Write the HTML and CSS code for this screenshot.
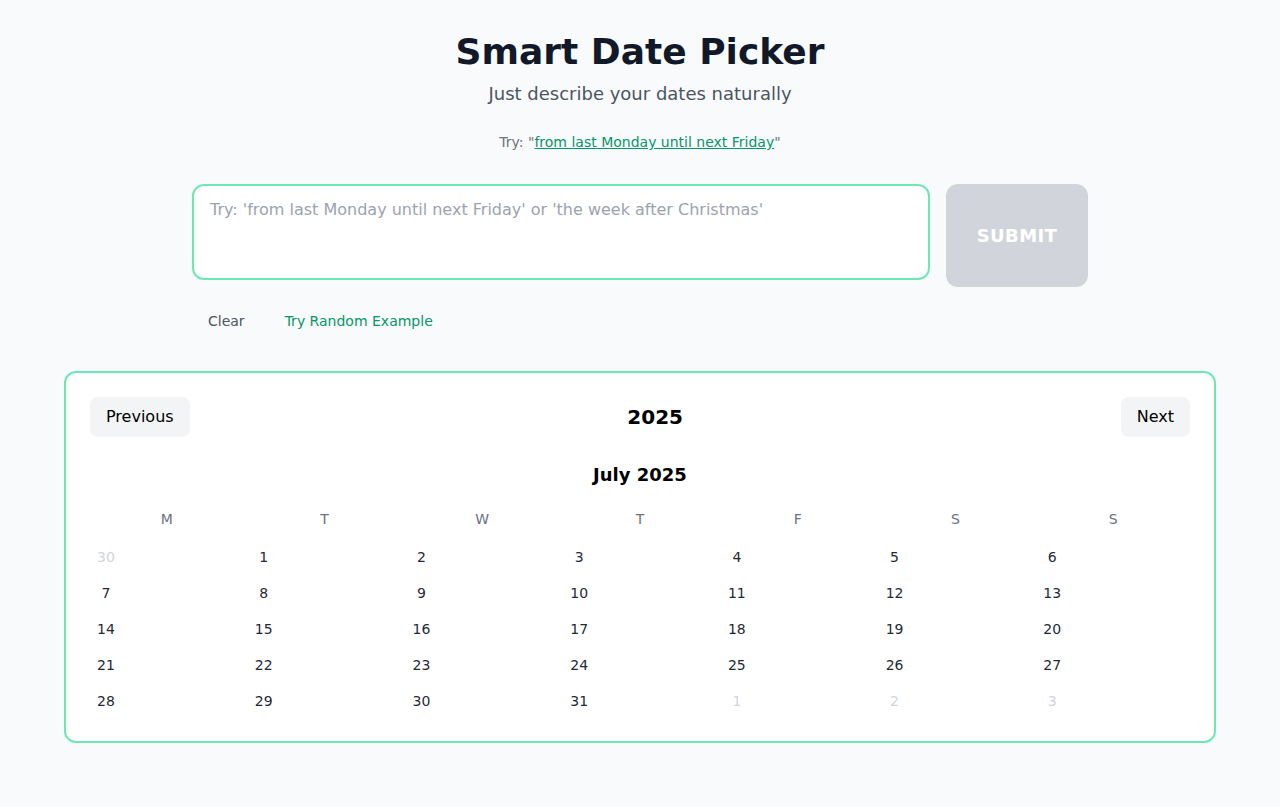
FILE: index.html
```html
<!DOCTYPE html>
<html lang="en">
<head>
<meta charset="utf-8">
<title>Smart Date Picker</title>
<link rel="stylesheet" href="styles.css">
</head>
<body>
<div class="page">
  <header class="hero">
    <h1 class="title">Smart Date Picker</h1>
    <p class="subtitle">Just describe your dates naturally</p>
    <p class="hint">Try: "<a class="hint-link" href="#">from last Monday until next Friday</a>"</p>
  </header>

  <section class="input-area">
    <div class="input-row">
      <textarea class="query" placeholder="Try: 'from last Monday until next Friday' or 'the week after Christmas'"></textarea>
      <button class="submit" type="button">SUBMIT</button>
    </div>
    <div class="actions">
      <button class="action clear" type="button">Clear</button>
      <button class="action random" type="button">Try Random Example</button>
    </div>
  </section>

  <section class="calendar">
    <div class="cal-nav">
      <button class="nav-btn" type="button">Previous</button>
      <h2 class="year">2025</h2>
      <button class="nav-btn" type="button">Next</button>
    </div>
    <h3 class="month">July 2025</h3>
    <div class="grid">
      <div class="wd">M</div><div class="wd">T</div><div class="wd">W</div><div class="wd">T</div><div class="wd">F</div><div class="wd">S</div><div class="wd">S</div>

      <div class="cell"><span class="day muted">30</span></div>
      <div class="cell"><span class="day">1</span></div>
      <div class="cell"><span class="day">2</span></div>
      <div class="cell"><span class="day">3</span></div>
      <div class="cell"><span class="day">4</span></div>
      <div class="cell"><span class="day">5</span></div>
      <div class="cell"><span class="day">6</span></div>

      <div class="cell"><span class="day">7</span></div>
      <div class="cell"><span class="day">8</span></div>
      <div class="cell"><span class="day">9</span></div>
      <div class="cell"><span class="day">10</span></div>
      <div class="cell"><span class="day">11</span></div>
      <div class="cell"><span class="day">12</span></div>
      <div class="cell"><span class="day">13</span></div>

      <div class="cell"><span class="day">14</span></div>
      <div class="cell"><span class="day">15</span></div>
      <div class="cell"><span class="day">16</span></div>
      <div class="cell"><span class="day">17</span></div>
      <div class="cell"><span class="day">18</span></div>
      <div class="cell"><span class="day">19</span></div>
      <div class="cell"><span class="day">20</span></div>

      <div class="cell"><span class="day">21</span></div>
      <div class="cell"><span class="day">22</span></div>
      <div class="cell"><span class="day">23</span></div>
      <div class="cell"><span class="day">24</span></div>
      <div class="cell"><span class="day">25</span></div>
      <div class="cell"><span class="day">26</span></div>
      <div class="cell"><span class="day">27</span></div>

      <div class="cell"><span class="day">28</span></div>
      <div class="cell"><span class="day">29</span></div>
      <div class="cell"><span class="day">30</span></div>
      <div class="cell"><span class="day">31</span></div>
      <div class="cell"><span class="day muted">1</span></div>
      <div class="cell"><span class="day muted">2</span></div>
      <div class="cell"><span class="day muted">3</span></div>
    </div>
  </section>
</div>
</body>
</html>
```

FILE: styles.css
```css
* { box-sizing: border-box; }

html, body {
  margin: 0;
  padding: 0;
  background: #f9fafb;
  font-family: "DejaVu Sans", "Liberation Sans", sans-serif;
  color: #111827;
}

.page {
  padding: 32px 64px 40px;
}

.hero {
  text-align: center;
}

.title {
  margin: 0 0 8px;
  font-size: 36px;
  line-height: 40px;
  font-weight: 700;
  color: #111827;
}

.subtitle {
  margin: 0 0 24px;
  font-size: 18px;
  line-height: 28px;
  color: #4b5563;
}

.hint {
  margin: 0 0 32px;
  font-size: 14px;
  line-height: 20px;
  color: #6b7280;
}

.hint-link {
  color: #059669;
  text-decoration: underline;
}

.input-area {
  max-width: 896px;
  margin: 0 auto 32px;
}

.input-row {
  display: flex;
  align-items: flex-start;
  gap: 16px;
}

.query {
  flex: 1;
  height: 96px;
  padding: 12px 16px;
  border: 2px solid #6ee7b7;
  border-radius: 12px;
  background: #ffffff;
  font-family: "DejaVu Sans", "Liberation Sans", sans-serif;
  font-size: 16px;
  line-height: 24px;
  color: #111827;
  resize: none;
  outline: none;
}

.query::placeholder {
  color: #9ca3af;
}

.submit {
  width: 142px;
  height: 103px;
  border: none;
  border-radius: 12px;
  background: #d1d5db;
  color: #ffffff;
  font-family: "DejaVu Sans", "Liberation Sans", sans-serif;
  font-size: 18px;
  font-weight: 700;
  letter-spacing: 0.4px;
}

.actions {
  display: flex;
  gap: 8px;
  margin-top: 16px;
}

.action {
  border: none;
  background: transparent;
  padding: 8px 16px;
  font-family: "DejaVu Sans", "Liberation Sans", sans-serif;
  font-size: 14px;
  line-height: 20px;
}

.clear { color: #4b5563; }
.random { color: #059669; }

.calendar {
  max-width: 1152px;
  margin: 0 auto;
  background: #ffffff;
  border: 2px solid #6ee7b7;
  border-radius: 12px;
  padding: 24px 24px 24px;
}

.cal-nav {
  display: flex;
  align-items: center;
  justify-content: space-between;
  margin-bottom: 24px;
}

.nav-btn {
  border: none;
  background: #f3f4f6;
  border-radius: 8px;
  padding: 8px 16px;
  font-family: "DejaVu Sans", "Liberation Sans", sans-serif;
  font-size: 16px;
  line-height: 24px;
  color: #000000;
}

.year {
  margin: 0;
  font-size: 20px;
  line-height: 28px;
  font-weight: 700;
  color: #000000;
}

.month {
  margin: 0 0 12px;
  text-align: center;
  font-size: 18px;
  line-height: 28px;
  font-weight: 700;
  color: #000000;
}

.grid {
  display: grid;
  grid-template-columns: repeat(7, 1fr);
  gap: 4px;
}

.wd {
  text-align: center;
  font-size: 14px;
  line-height: 20px;
  padding: 8px 0;
  color: #6b7280;
}

.cell {
  display: flex;
  justify-content: flex-start;
}

.day {
  width: 32px;
  height: 32px;
  display: flex;
  align-items: center;
  justify-content: center;
  font-size: 14px;
  color: #1f2937;
}

.day.muted {
  color: #d1d5db;
}
```
